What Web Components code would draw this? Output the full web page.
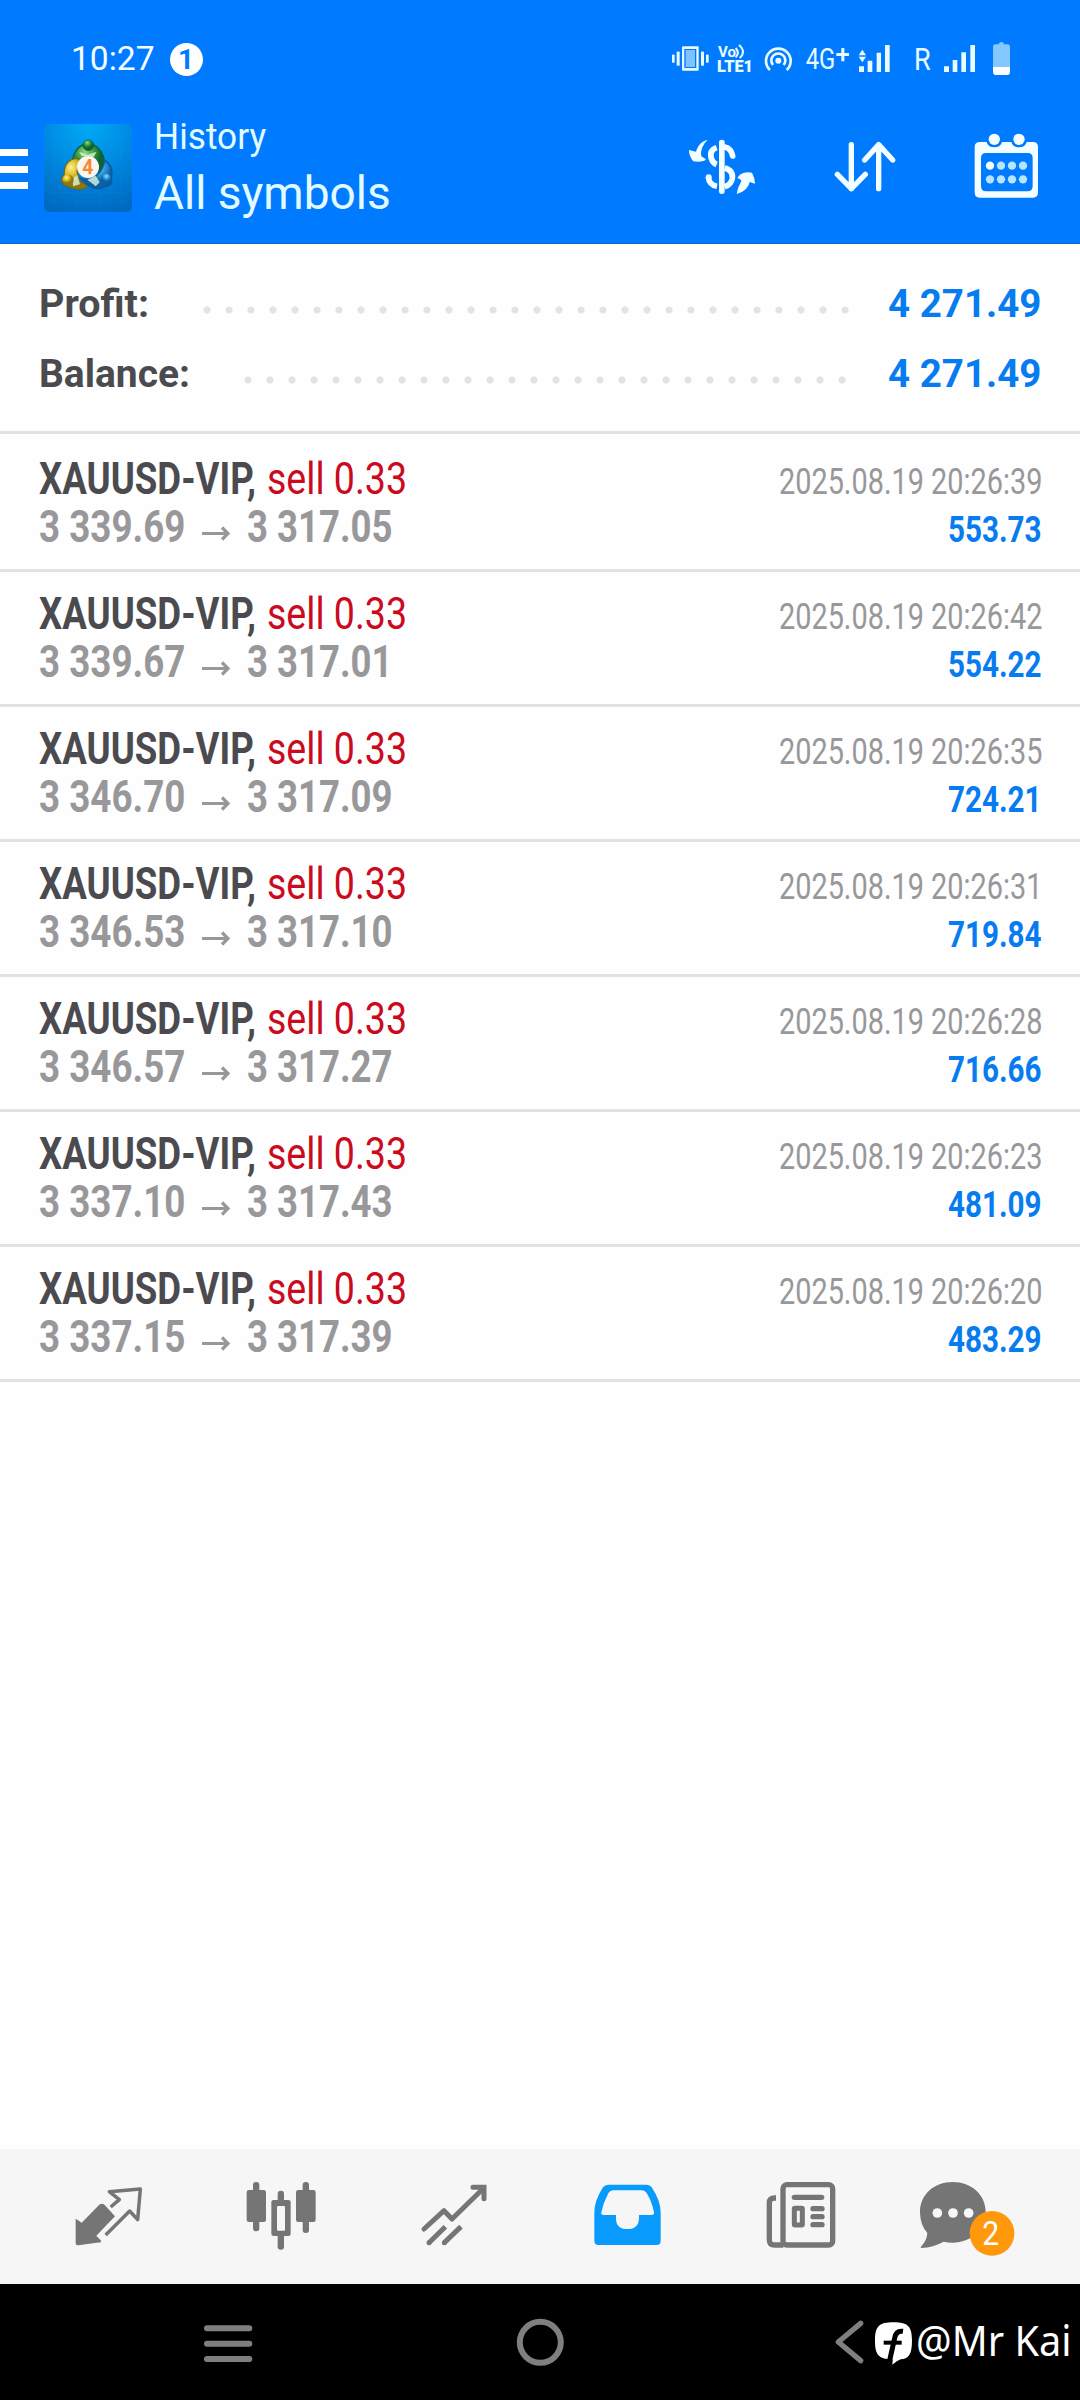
<!DOCTYPE html>
<html lang="en">
<head>
<meta charset="utf-8">
<meta name="viewport" content="width=device-width">
<title>History</title>
<style>
body{margin:0;width:1080px;height:2400px;background:#fefefe;font-family:Roboto,sans-serif;overflow:hidden}
</style>
</head>
<body>
<history-screen></history-screen>
<script>
const ctx = document.createElement('canvas').getContext('2d');
const define = (name, html, setup) => customElements.define(name, class extends HTMLElement {
  constructor(){ super(); this.attachShadow({mode:'open'}); }
  connectedCallback(){
    this.shadowRoot.innerHTML = typeof html === 'function' ? html(this) : html;
    if (setup) setup(this);
  }
});

/* Text squeezed horizontally.
   width  = ink width of the text (or of `sample`, when the scale is shared by several texts) */
define('fit-text', el => {
  const size = +el.getAttribute('size'), weight = el.getAttribute('weight') || 400;
  const line = el.getAttribute('line'), width = +el.getAttribute('width');
  const family = el.getAttribute('family') || 'Roboto';
  const text = el.getAttribute('text'), sample = el.getAttribute('sample');
  ctx.font = `${weight} ${size}px "${family}"`;
  const m = ctx.measureText(sample || text);
  const s = width / (m.actualBoundingBoxLeft + m.actualBoundingBoxRight);
  const own = ctx.measureText(text);
  const w = sample ? own.width * s : width;
  const dx = sample ? 0 : m.actualBoundingBoxLeft * s;
  return `<style>:host{display:block;flex:none;width:${w}px;height:${line}px}
  span{display:inline-block;white-space:pre;font:${weight} ${size}px/${line}px "${family}",sans-serif;transform-origin:0 0;transform:translateX(${dx}px) scaleX(${s})}</style><span>${text}</span>`;
});

define('status-bar', `<style>
:host{display:flex;height:110px;align-items:flex-start;color:#f4feff}
fit-text{margin:33px 0 0 73px}
.badge{margin:43px 0 0 15.5px;width:33px;height:33px;border-radius:50%;background:#fff;color:#007bff;font:700 28px/33px Roboto,sans-serif;text-align:center}
svg{margin:20px 40px 0 auto}
</style>
<fit-text text="10:27" size="33" line="51" weight="450" width="81"></fit-text>
<div class="badge">1</div>
<svg width="400" height="80" viewBox="0 0 1200 240" fill="#e9fbff">
 <g><rect x="126" y="79" width="50" height="73" rx="3"/><rect x="133" y="87" width="36" height="57" fill="#0078f5"/><rect x="137" y="90" width="28" height="51" fill="#7cc4ff"/>
 <rect x="96" y="104" width="8" height="24"/><rect x="110" y="95" width="9" height="42"/><rect x="183" y="95" width="9" height="42"/><rect x="198" y="104" width="8" height="24"/></g>
 <text x="234" y="112" font-family="Roboto" font-weight="700" font-size="46" textLength="54" lengthAdjust="spacingAndGlyphs">Vo</text>
 <path d="M287 84q13 14 0 28M297 75q23 20 2 39" fill="none" stroke="#e9fbff" stroke-width="6"/>
 <text x="231" y="156" font-family="Roboto" font-weight="900" font-size="48" textLength="108" lengthAdjust="spacingAndGlyphs">LTE1</text>
 <g fill="none" stroke="#e9fbff" stroke-width="8"><path d="M390 150a37 37 0 1 1 50 0"/><path d="M399 135a21 21 0 1 1 32 0"/></g><circle cx="415" cy="122" r="9"/>
 <text x="497" y="146" font-family="Roboto" font-size="88" textLength="89" lengthAdjust="spacingAndGlyphs">4G</text>
 <path d="M604 84h9v15h14v9h-14v16h-9v-16h-15v-9h15z"/>
 <path d="M656 106l11-17 11 17zM656 110h22l-11 17zM657 139h15v17h-15zM683 122h14v34h-14zM710 98h13v58h-13zM735 75h14v81h-14z"/>
 <text x="822" y="150" font-family="Roboto" font-size="92" textLength="50" lengthAdjust="spacingAndGlyphs">R</text>
 <path d="M912 139h15v17h-15zM938 120h14v36h-14zM964 97h14v59h-14zM991 75h14v81h-14z"/>
 <path d="M1067 73h9q1-7 8-7t8 7h10q8 0 8 8v60h-51v-60q0-8 8-8z" fill="#83c9ff"/><path d="M1059 141h51v14q0 10-10 10h-31q-10 0-10-10z" fill="#fff"/>
</svg>`);

define('app-logo', `<style>:host{display:block;width:88px;height:88px;flex:none}svg{display:block}</style>
<svg width="88" height="88" viewBox="132 40 264 264">
<defs><radialGradient id="b" cx=".5" cy="0" r="1.1"><stop offset="0" stop-color="#00aaf7"/><stop offset=".55" stop-color="#0083dc"/><stop offset="1" stop-color="#0065bb"/></radialGradient>
<radialGradient id="g" cx=".4" cy=".25"><stop offset="0" stop-color="#8fdc7c"/><stop offset=".6" stop-color="#2f963f"/><stop offset="1" stop-color="#0c6531"/></radialGradient>
<radialGradient id="y" cx=".35" cy=".3"><stop offset="0" stop-color="#fff08a"/><stop offset=".6" stop-color="#d7b71e"/><stop offset="1" stop-color="#8c7711"/></radialGradient>
<radialGradient id="u" cx=".5" cy=".25"><stop offset="0" stop-color="#8fdcff"/><stop offset=".6" stop-color="#2a94d6"/><stop offset="1" stop-color="#0b5fa3"/></radialGradient></defs>
<rect x="132" y="40" width="264" height="264" rx="15" fill="url(#b)"/>
<path d="M165 60v230M198 60v230M231 50v240M264 50v240M297 50v240M330 60v230M363 60v230M145 80h238M145 113h238M145 245h238M145 275h238" stroke="#4bc8ff" stroke-width="1.5" opacity=".13"/>
<path d="M217 160C217 122 240 100 264 100s49 22 49 60q0 25-14 38-4-24-20-42-14-14-30-8-14-6-32 12z" fill="url(#g)" stroke="#12603a" stroke-width="4"/>
<path d="M231 143c-26 2-39 22-39 50-10 12-8 25 2 30 25 13 48 15 61 9l8-7c-18-6-29-17-31-39-2-16 5-27 13-37z" fill="url(#y)" stroke="#6d6b17" stroke-width="4"/>
<path d="M314 149c24 14 24 35 20 54 5 14-2 23-14 23-30 17-52 6-78-23 17 5 35 3 46-7 16-13 24-29 26-47z" fill="url(#u)" stroke="#0b5b9d" stroke-width="4"/>
<path d="M245 135l-8-12 25 9 28-9-9 16zM218 204l14-12 8 29-21 6zM287 195l12 20-12 12-25-20z" fill="#dff4dc" opacity=".8"/>
<circle cx="265" cy="104" r="16" fill="url(#g)" stroke="#155c30" stroke-width="2"/><ellipse cx="204" cy="207" rx="17" ry="16" fill="url(#y)"/><circle cx="319" cy="204" r="15" fill="url(#u)"/>
<circle cx="264" cy="169" r="33" fill="#fbf6f0"/>
<text x="247" y="189" font-family="Roboto" font-weight="700" font-size="58" fill="#f58a35">4</text>
</svg>`);

define('app-header', `<style>
:host{display:block;height:243.5px;background:#007bff;box-sizing:border-box;border-bottom:1px solid #1262c4}
.bar{display:flex;height:132px;align-items:flex-start}
.menu{width:28px;display:flex;flex-direction:column;gap:9.5px;margin-top:39px}
.menu i{height:7px;background:#fff}
app-logo{margin:13.5px 0 0 16px}
.titles{color:#e2fbff;margin:9px 0 0 24px}
.titles fit-text+fit-text{margin:8px 0 0 -2px}
.actions{display:flex;margin-left:auto}
svg{display:block}
</style>
<status-bar></status-bar>
<div class="bar">
 <div class="menu"><i></i><i></i><i></i></div>
 <app-logo></app-logo>
 <div class="titles"><fit-text text="History" size="36" line="36" width="110"></fit-text><fit-text text="All symbols" size="47" line="60" width="234.5"></fit-text></div>
 <div class="actions">
 <svg width="140" height="132" viewBox="0 0 420 396" fill="#f2feff"><rect x="177" y="89" width="17" height="163" rx="8"/>
  <g fill="none" stroke="#f2feff" stroke-width="17"><path d="M170 113q-23 8-16 32 4 14 16 19"/><path d="M194 111q20 4 24 27" stroke-linecap="round"/><path d="M194 174q26 7 23 31-3 19-23 25"/><path d="M145 203q3 22 26 26" /></g><circle cx="146" cy="202" r="9"/>
  <path d="M143 89q-18 4-27 18-6 10-8 18l-21-5q0 19 13 34 16 3 31-1 5-1 7-5l-14-9q-3-13 3-27 5-13 16-23zM230 252q2-10 5-20 8-15 9-21l-12-8q8-12 18-14 12-4 26-1 9 16 9 33l-16-5q-3 13-12 22-10 10-27 14z"/></svg>
 <svg width="140" height="132" viewBox="420 0 420 396" fill="none" stroke="#f2feff" stroke-width="16" stroke-linecap="round" stroke-linejoin="round"><path d="M574 104v132M532 193l42 43 42-43M656 236v-132M614 150l42-46 42 46"/></svg>
 <svg width="140" height="132" viewBox="840 0 420 396" fill="#f2feff"><path fill-rule="evenodd" d="M960 96h20q4 16 23 16t23-16h28q4 16 23 16t23-16h19q15 0 15 15v136q0 16-15 16h-160q-15 0-15-16v-136q0-15 16-15zM978 129q-15 0-15 15v84q0 16 15 16h125q15 0 15-16v-84q0-15-15-15z"/><circle cx="1003" cy="88" r="17"/><circle cx="1077" cy="88" r="17"/><circle cx="990" cy="167" r="12.500"/><g fill="#b5e5ff"><circle cx="1023" cy="167" r="12.500"/><circle cx="1056" cy="167" r="12.500"/><circle cx="1089" cy="167" r="12.500"/><circle cx="990" cy="208" r="12.500"/><circle cx="1023" cy="208" r="12.500"/><circle cx="1056" cy="208" r="12.500"/><circle cx="1089" cy="208" r="12.500"/></g></svg>
 </div>
</div>`);

define('summary-row', el => `<style>
:host{display:flex;height:70px;padding:0 40px 0 41px;color:#4b4b4f}
.dots{width:${el.getAttribute('dots')*22}px;height:10px;margin:36px 0 0 48.8px;background:radial-gradient(circle at 11px 5px,#e3e3e3 3.1px,transparent 4px) 0 0/22px 10px}
.v{margin-left:auto;color:#067cf0}
</style><fit-text text="${el.getAttribute('label')}" size="39" line="70" weight="700" width="${el.getAttribute('ink')}"></fit-text><div class="dots"></div><fit-text class="v" text="${el.getAttribute('value')}" size="39" line="70" weight="700" width="151"></fit-text>`);

define('deal-row', el => `<style>
:host{display:flex;justify-content:space-between;box-sizing:border-box;height:135px;border-bottom:3px solid #e2e2e2;padding:18px 38px 0 39px}
.line{display:flex;height:48px}
.symbol{color:#4b4b4f}.side{color:#cb0a1e;margin-left:11px}.price{color:#98989a}
.right{padding-top:2.5px;display:flex;flex-direction:column;align-items:flex-end}
.time{color:#98989a}.profit{color:#067cf0}
svg{display:block;margin:0 auto}.arrow{width:62px}
</style>
<div><div class="line"><fit-text class="symbol" text="XAUUSD-VIP," sample="XAUUSD-VIP," size="44" line="48" weight="700" width="215.5"></fit-text><fit-text class="side" text="sell 0.33" sample="sell 0.33" size="44" line="48" width="136"></fit-text></div>
<div class="line price"><fit-text text="${el.getAttribute('open')}" sample="3 339.69" size="44" line="48" weight="700" width="143.700"></fit-text><div class="arrow"><svg width="28" height="48" viewBox="0 0 28 48" fill="none" stroke="#98989a" stroke-width="3.200"><path d="M0 30.500h26M20 24.500l6 6-6 6"/></svg></div><fit-text text="${el.getAttribute('close')}" sample="3 317.05" size="44" line="48" weight="700" width="143.700"></fit-text></div></div>
<div class="right"><fit-text class="time" text="${el.getAttribute('time')}" sample="2025.08.19 20:26:39" size="36.5" line="48" width="261.400"></fit-text><fit-text class="profit" text="${el.getAttribute('profit')}" sample="553.73" size="36.5" line="48" weight="700" width="92"></fit-text></div>`);

define('tab-bar', `<style>
:host{display:flex;height:135px;background:#f6f6f6;padding-left:22px;box-sizing:border-box}
svg{display:block;flex:none}
</style>
<svg width="173" height="135" viewBox="-54 27 519 405" fill="#757575"><path d="M107 236l18 12 52-53q9-7 17 0l31 34-56 58 15 16-2 4-67 9q-8 0-8-8z"/><path d="M212 201l26-22-30-24 93-8-8 92-24-26-72 72" fill="none" stroke="#757575" stroke-width="10.500" stroke-linejoin="round"/></svg>
<svg width="173" height="135" viewBox="465 27 519 405" fill="#757575"><rect x="620" y="150" width="58" height="96" rx="7"/><rect x="639" y="126" width="19" height="148" rx="9"/><rect x="768" y="150" width="59" height="96" rx="7"/><rect x="788" y="126" width="19" height="153" rx="9"/><rect x="713" y="152" width="19" height="177" rx="9"/><rect x="694" y="180" width="58" height="108" rx="7"/><rect x="711" y="198" width="24" height="74" rx="3" fill="#f6f6f6"/></svg>
<svg width="173" height="135" viewBox="-36 27 519 405" fill="none" stroke="#757575" stroke-width="15"><path d="M132 267l60-55 24 25 93-91" stroke-linecap="round" stroke-linejoin="round"/><path d="M279 142h33v34" stroke-linecap="round"/><path d="M147 308l49-48M193 308l50-48"/><g fill="#757575" stroke="none"><circle cx="147" cy="308" r="7.500"/><circle cx="193" cy="308" r="7.500"/></g></svg>
<svg width="173" height="135" viewBox="483 27 519 405" fill="#089bfd"><path d="M687 134h111q12 0 18 9 26 39 26 75v84q0 13-13 13h-173q-13 0-13-13v-84q0-36 25-75 7-9 19-9z"/><path d="M699 151h87q9 0 14 8 16 27 22 58 1 8-7 8h-38v8q0 34-35 34t-34-34v-8h-37q-9 0-7-8 6-29 21-57 5-9 14-9z" fill="#f6f6f6"/></svg>
<svg width="173" height="135" viewBox="-18 27 519 405" fill="none" stroke="#757575" stroke-width="16"><rect x="189" y="134" width="149" height="181" rx="12"/><path d="M190 315h-26q-16 0-16-16v-110q0-15 16-15h4"/><g stroke-linecap="round"><path d="M223 172h82M279 206h27M279 230h27M279 254h27"/></g><rect x="223" y="205" width="24" height="50" rx="2" stroke-width="15"/></svg>
<svg width="173" height="135" viewBox="501 27 519 405"><path d="M698 126c56 0 99 38 99 90s-43 92-99 92q-15 0-27-3-31 17-67 19-4-1-1-4 18-19 19-41-22-25-22-63c0-52 42-90 98-90z" fill="#757575"/><g fill="#f8f8f8"><circle cx="652" cy="219" r="14.500"/><circle cx="699" cy="219" r="14.500"/><circle cx="746" cy="219" r="14.500"/></g><circle cx="816" cy="280" r="67" fill="#ff980a"/><text x="787" y="315" font-family="Roboto" font-size="97" fill="#fff" textLength="51" lengthAdjust="spacingAndGlyphs">2</text></svg>`);

define('nav-bar', `<style>
:host{display:flex;height:116px;background:#000}
svg{display:block;flex:none}
.tag{display:flex;color:#fff}
fit-text{margin:26px 0 0 4.500px}
</style>
<svg width="412" height="116" viewBox="0 0 412 116" stroke="#7f7f7f" stroke-width="6" stroke-linecap="round"><path d="M207 44.300h42.300M207 59.700h42.300M207 75h42.300"/></svg>
<svg width="412" height="116" viewBox="412 0 412 116"><circle cx="540.300" cy="58.300" r="20.500" fill="none" stroke="#7f7f7f" stroke-width="6"/></svg>
<svg width="46" height="116" viewBox="72 12 138 348"><path d="M182 130l-67 56 67 56" fill="none" stroke="#7f7f7f" stroke-width="16" stroke-linecap="round" stroke-linejoin="round"/></svg>
<div class="tag"><svg width="43" height="116" viewBox="210 12 129 348"><path d="M281 127c44 0 55 13 55 55s-11 54-34 56q-11 4-25 16l1-16c-42-1-53-13-53-56s12-55 56-55z" fill="#fff"/><path d="M309 154q-21-3-25 20l-15 67" fill="none" stroke="#000" stroke-width="15"/><path d="M251 188h54" stroke="#000" stroke-width="12"/></svg>
<fit-text text="@Mr Kai" size="41" line="60" family="Noto Sans" width="151"></fit-text></div>`);

const deals = [
 ['3 339.69','3 317.05','39','553.73'],['3 339.67','3 317.01','42','554.22'],['3 346.70','3 317.09','35','724.21'],
 ['3 346.53','3 317.10','31','719.84'],['3 346.57','3 317.27','28','716.66'],['3 337.10','3 317.43','23','481.09'],['3 337.15','3 317.39','20','483.29']];
define('history-screen', `<style>
:host{display:flex;flex-direction:column;width:1080px;height:2400px;background:#fefefe}
app-header,tab-bar,nav-bar{flex:none}
.summary{height:190.500px;box-sizing:border-box;padding-top:25px;border-bottom:3px solid #e2e2e2}
.list{flex:1;padding-top:3px}
</style>
<app-header></app-header>
<div class="summary"><summary-row label="Profit:" ink="106" dots="30" value="4 271.49"></summary-row><summary-row label="Balance:" ink="147" dots="28" value="4 271.49"></summary-row></div>
<div class="list">${deals.map(d => `<deal-row open="${d[0]}" close="${d[1]}" time="2025.08.19 20:26:${d[2]}" profit="${d[3]}"></deal-row>`).join('')}</div>
<tab-bar></tab-bar><nav-bar></nav-bar>`);
</script>
</body>
</html>
